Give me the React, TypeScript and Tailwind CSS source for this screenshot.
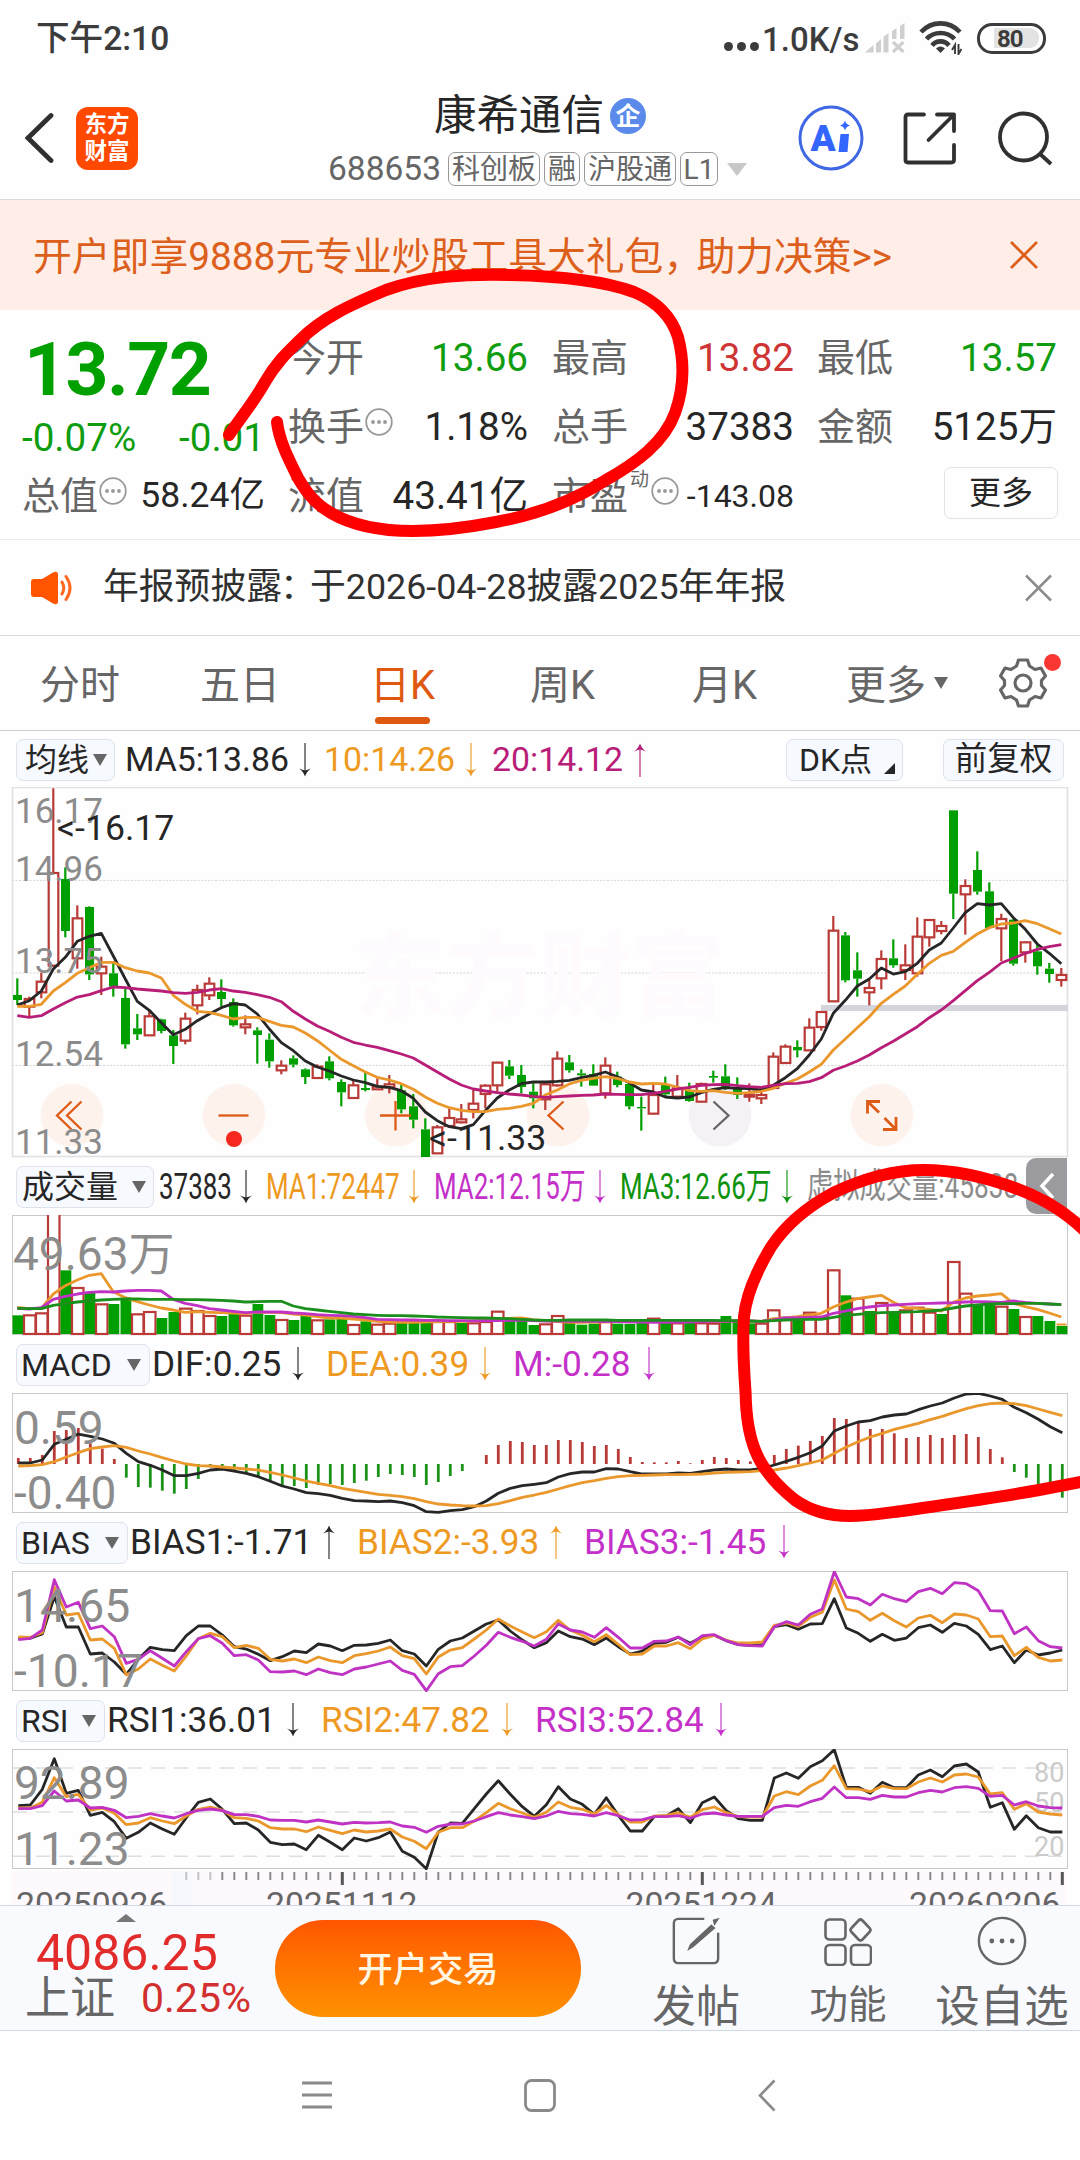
import { ReactNode } from 'react'
import { clsx } from 'clsx'

const GREEN = '#009f00'
const RED = '#b93a37'
const ORANGE = '#ea972b'
const PURPLE = '#c032c4'
const MAGENTA = '#b81d78'
const INK = '#262626'

// 'u' = up (hollow red), 'd' = down (solid green); values are high, body top, body bottom, low
type Candle = ['u' | 'd', number, number, number, number]

const CANDLES: Candle[] = [
  ['d', 595, 645, 660, 675], ['u', 650, 657, 680, 708], ['u', 578, 605, 637, 655], ['u', 25, 279, 557, 560],
  ['d', 262, 297, 453, 472], ['u', 376, 415, 535, 566], ['d', 379, 381, 583, 600], ['u', 530, 560, 580, 645],
  ['d', 545, 580, 620, 650], ['d', 622, 654, 793, 806], ['d', 702, 745, 763, 780], ['u', 690, 709, 766, 768],
  ['d', 716, 718, 753, 760], ['d', 750, 766, 798, 852], ['u', 698, 716, 782, 793], ['u', 614, 630, 676, 703],
  ['u', 592, 611, 646, 660], ['d', 598, 636, 657, 680], ['d', 655, 666, 736, 740], ['u', 706, 733, 742, 763],
  ['d', 742, 751, 765, 851], ['d', 760, 779, 844, 863], ['u', 841, 857, 871, 883], ['d', 826, 835, 854, 862],
  ['d', 865, 868, 891, 912], ['u', 853, 860, 894, 896], ['d', 829, 844, 895, 901], ['d', 898, 906, 937, 979],
  ['u', 900, 916, 954, 956], ['d', 878, 924, 930, 934], ['u', 895, 920, 928, 930], ['u', 885, 913, 922, 940],
  ['d', 915, 931, 988, 1000], ['d', 942, 979, 1019, 1045], ['d', 1015, 1048, 1131, 1131], ['u', 1035, 1042, 1120, 1122],
  ['u', 983, 1014, 1038, 1040], ['u', 972, 1018, 1027, 1030], ['u', 925, 971, 990, 1015], ['u', 913, 917, 942, 985],
  ['u', 845, 848, 916, 935], ['d', 840, 859, 887, 897], ['d', 855, 885, 921, 940], ['d', 910, 935, 955, 985],
  ['u', 905, 913, 958, 990], ['u', 814, 836, 916, 920], ['d', 825, 847, 871, 878], ['d', 868, 880, 886, 920],
  ['d', 853, 882, 917, 917], ['u', 832, 857, 940, 956], ['d', 875, 890, 915, 922], ['d', 905, 912, 979, 988],
  ['d', 950, 981, 985, 1052], ['u', 915, 945, 1001, 1003], ['d', 890, 912, 943, 950], ['u', 885, 925, 950, 955],
  ['d', 908, 930, 963, 965], ['u', 908, 912, 965, 967], ['d', 872, 888, 893, 908], ['d', 853, 889, 925, 930],
  ['d', 892, 925, 945, 957], ['u', 910, 944, 950, 965], ['u', 920, 945, 955, 972], ['u', 817, 830, 924, 926],
  ['u', 793, 800, 849, 851], ['d', 781, 801, 811, 832], ['u', 715, 743, 811, 813], ['u', 693, 696, 741, 752],
  ['u', 408, 452, 664, 666], ['d', 456, 466, 601, 607], ['d', 517, 571, 596, 650], ['u', 600, 624, 637, 676],
  ['u', 511, 537, 595, 628], ['d', 478, 535, 556, 563], ['u', 493, 556, 570, 600], ['u', 412, 470, 580, 590],
  ['u', 417, 420, 472, 500], ['u', 423, 438, 453, 463], ['d', 91, 91, 341, 417], ['u', 298, 318, 343, 464],
  ['d', 214, 270, 335, 344], ['d', 307, 334, 444, 446], ['u', 401, 417, 445, 543], ['d', 417, 419, 551, 557],
  ['u', 484, 487, 517, 548], ['d', 490, 514, 559, 584], ['d', 549, 566, 582, 608], ['u', 564, 585, 600, 620],
]

const MA5 = [675, 662, 633, 567, 532, 484, 469, 460, 528, 597, 664, 691, 728, 764, 748, 722, 702, 683, 671, 675, 702, 747, 788, 812, 843, 861, 873, 888, 900, 908, 919, 922, 932, 955, 996, 1022, 1040, 1046, 1034, 992, 954, 930, 911, 906, 906, 904, 901, 893, 886, 876, 890, 908, 930, 936, 951, 954, 951, 938, 928, 923, 925, 926, 930, 916, 893, 866, 825, 777, 700, 661, 618, 597, 564, 582, 575, 550, 510, 489, 444, 398, 371, 375, 371, 413, 448, 492, 520, 551]
const MA10 = [679, 679, 673, 633, 608, 580, 563, 547, 547, 563, 573, 579, 594, 646, 673, 694, 697, 706, 717, 712, 712, 724, 736, 741, 759, 782, 810, 838, 857, 876, 892, 900, 911, 928, 951, 970, 983, 991, 995, 995, 988, 985, 979, 970, 945, 930, 912, 901, 895, 890, 895, 906, 912, 910, 912, 921, 932, 934, 932, 937, 940, 938, 934, 925, 910, 897, 876, 853, 810, 777, 743, 710, 670, 643, 618, 583, 550, 526, 514, 487, 462, 443, 432, 429, 422, 431, 446, 462]
const MA20 = [707, 712, 707, 687, 668, 651, 644, 632, 621, 623, 627, 630, 633, 638, 640, 637, 630, 626, 633, 637, 644, 652, 665, 694, 717, 738, 754, 772, 787, 795, 802, 812, 822, 834, 855, 876, 897, 915, 927, 933, 938, 942, 945, 949, 952, 950, 948, 946, 945, 942, 943, 944, 944, 940, 934, 927, 922, 916, 914, 913, 917, 920, 922, 916, 911, 910, 905, 893, 871, 858, 843, 825, 803, 784, 762, 740, 713, 690, 662, 632, 602, 577, 549, 535, 520, 508, 500, 494]

const VOL_UP = new Set([1, 2, 3, 5, 7, 10, 11, 14, 15, 16, 19, 22, 25, 28, 30, 31, 35, 36, 38, 39, 40, 44, 45, 49, 53, 55, 57, 58, 62, 63, 64, 66, 67, 68, 70, 72, 74, 75, 76, 78, 79, 82, 84])
const VOL = [466, 463, 457, 150, 331, 381, 398, 430, 432, 413, 460, 453, 474, 456, 443, 450, 465, 468, 460, 464, 432, 465, 477, 480, 468, 478, 478, 475, 492, 484, 491, 488, 488, 487, 486, 483, 483, 489, 487, 483, 452, 482, 480, 495, 490, 465, 489, 494, 491, 478, 491, 492, 480, 473, 488, 487, 487, 487, 488, 468, 480, 490, 488, 448, 470, 475, 455, 468, 328, 406, 413, 453, 426, 457, 448, 440, 455, 462, 303, 398, 433, 432, 437, 447, 468, 468, 483, 498]
const VMA1 = [442, 446, 445, 402, 377, 360, 346, 341, 395, 413, 425, 435, 444, 450, 457, 455, 457, 458, 459, 461, 457, 457, 458, 462, 465, 470, 474, 474, 477, 480, 484, 486, 487, 487, 486, 485, 484, 484, 483, 481, 478, 475, 474, 479, 482, 485, 487, 487, 486, 486, 485, 485, 484, 484, 484, 484, 484, 485, 485, 484, 482, 483, 484, 476, 474, 470, 465, 460, 441, 427, 416, 411, 406, 427, 443, 445, 448, 453, 427, 414, 408, 405, 401, 430, 440, 448, 459, 471]
const VMA2 = [445, 447, 443, 418, 409, 402, 397, 395, 396, 393, 391, 391, 393, 418, 430, 437, 446, 450, 454, 458, 456, 456, 456, 459, 461, 464, 466, 467, 469, 473, 478, 479, 480, 480, 481, 481, 482, 482, 483, 482, 482, 481, 480, 482, 483, 483, 484, 484, 484, 485, 485, 486, 486, 487, 487, 486, 486, 485, 484, 484, 483, 483, 484, 480, 474, 473, 472, 471, 460, 453, 446, 441, 437, 435, 433, 431, 430, 429, 428, 426, 425, 426, 427, 423, 427, 430, 432, 434]
const VMA3 = [445, 446, 446, 436, 431, 426, 423, 420, 418, 417, 417, 418, 418, 418, 419, 419, 420, 421, 423, 426, 425, 424, 424, 438, 446, 450, 454, 458, 462, 464, 466, 467, 467, 468, 469, 471, 472, 473, 474, 474, 475, 476, 478, 480, 481, 481, 480, 480, 480, 480, 481, 481, 481, 481, 481, 481, 481, 481, 481, 482, 482, 483, 484, 482, 480, 479, 478, 478, 472, 466, 463, 460, 458, 457, 456, 455, 453, 450, 444, 438, 435, 432, 431, 431, 430, 430, 432, 434]

const MACD_BARS = [894, 894, 885, 813, 810, 804, 850, 866, 897, 953, 981, 983, 992, 1001, 987, 957, 922, 930, 935, 940, 948, 963, 975, 978, 984, 975, 972, 975, 969, 962, 951, 942, 945, 951, 975, 966, 948, 933, 912, 885, 855, 843, 846, 855, 855, 840, 840, 846, 858, 855, 867, 891, 906, 907, 907, 903, 910, 900, 891, 894, 900, 904, 900, 885, 867, 857, 843, 828, 774, 777, 786, 807, 807, 820, 834, 831, 825, 834, 825, 822, 831, 867, 892, 936, 953, 975, 968, 1013]
const DIF = [909, 909, 900, 853, 838, 822, 829, 837, 850, 880, 905, 916, 930, 947, 947, 940, 930, 927, 933, 940, 950, 964, 978, 987, 998, 1001, 1006, 1015, 1022, 1023, 1025, 1023, 1028, 1037, 1055, 1057, 1052, 1049, 1040, 1023, 1000, 985, 977, 973, 968, 951, 941, 936, 936, 926, 927, 935, 942, 942, 942, 939, 940, 935, 930, 927, 930, 930, 925, 915, 904, 892, 878, 858, 813, 798, 786, 782, 771, 765, 762, 749, 738, 729, 714, 702, 700, 708, 718, 742, 758, 778, 800, 818]
const DEA = [918, 917, 914, 905, 891, 878, 866, 861, 857, 862, 873, 882, 893, 903, 912, 917, 918, 921, 924, 927, 930, 937, 945, 954, 963, 970, 977, 985, 991, 997, 1003, 1006, 1010, 1016, 1025, 1032, 1035, 1037, 1038, 1037, 1031, 1022, 1012, 1005, 997, 987, 977, 968, 962, 955, 950, 947, 946, 945, 944, 944, 943, 942, 939, 937, 936, 935, 932, 930, 924, 917, 909, 900, 880, 861, 845, 831, 820, 808, 799, 790, 779, 769, 757, 746, 737, 731, 729, 731, 737, 747, 757, 767]

const BIAS1 = [355, 355, 342, 230, 321, 321, 402, 399, 426, 463, 418, 382, 389, 392, 347, 318, 318, 345, 380, 387, 403, 422, 410, 393, 398, 372, 378, 392, 376, 375, 370, 360, 392, 402, 438, 388, 363, 354, 333, 312, 300, 333, 360, 383, 368, 333, 350, 357, 374, 354, 380, 402, 393, 370, 367, 352, 370, 350, 346, 362, 374, 376, 374, 320, 314, 328, 312, 311, 236, 324, 340, 364, 343, 361, 354, 323, 315, 337, 310, 318, 343, 389, 378, 428, 390, 405, 399, 390]
const BIAS2 = [351, 352, 338, 200, 285, 280, 360, 357, 385, 464, 447, 417, 436, 453, 408, 356, 340, 350, 383, 376, 385, 418, 423, 417, 428, 411, 422, 428, 407, 401, 393, 381, 407, 416, 462, 411, 390, 383, 357, 330, 297, 318, 336, 353, 335, 301, 331, 346, 365, 344, 373, 404, 402, 378, 378, 368, 386, 357, 346, 361, 369, 369, 366, 316, 309, 319, 292, 277, 180, 267, 275, 301, 280, 302, 321, 294, 286, 308, 282, 285, 297, 350, 348, 407, 382, 412, 423, 420]
const BIAS3 = [359, 355, 330, 179, 261, 247, 326, 318, 350, 430, 418, 392, 415, 438, 395, 356, 347, 370, 407, 404, 420, 455, 456, 453, 464, 447, 458, 464, 447, 441, 432, 423, 451, 463, 512, 461, 440, 437, 408, 376, 337, 352, 364, 378, 358, 312, 330, 336, 352, 323, 352, 384, 384, 364, 363, 351, 374, 347, 344, 362, 374, 377, 378, 320, 305, 315, 283, 267, 155, 231, 236, 255, 223, 236, 245, 215, 205, 221, 188, 191, 212, 272, 273, 341, 321, 362, 380, 384]

const RSI1 = [857, 855, 808, 716, 820, 811, 886, 877, 905, 955, 937, 909, 927, 943, 893, 847, 837, 868, 911, 909, 930, 967, 974, 972, 989, 946, 967, 989, 954, 963, 953, 936, 994, 1012, 1046, 936, 909, 910, 866, 822, 782, 823, 860, 889, 854, 800, 837, 853, 883, 833, 886, 933, 933, 890, 888, 866, 908, 848, 831, 872, 896, 901, 901, 774, 759, 775, 740, 722, 689, 802, 802, 820, 787, 803, 803, 765, 750, 770, 738, 732, 756, 862, 848, 928, 887, 923, 936, 936]
const RSI2 = [864, 864, 847, 773, 830, 823, 870, 864, 880, 914, 909, 893, 903, 911, 888, 868, 861, 870, 893, 895, 903, 923, 927, 927, 935, 921, 931, 941, 930, 936, 933, 927, 951, 964, 986, 937, 923, 923, 903, 878, 850, 866, 879, 892, 877, 846, 862, 868, 882, 856, 884, 906, 906, 888, 886, 878, 892, 869, 861, 878, 890, 891, 891, 828, 815, 824, 798, 781, 737, 806, 807, 815, 798, 806, 806, 786, 774, 786, 765, 762, 771, 822, 818, 868, 851, 876, 882, 885]
const RSI3 = [866, 866, 857, 813, 843, 840, 864, 862, 871, 893, 889, 881, 888, 894, 881, 871, 867, 872, 884, 884, 889, 900, 901, 901, 906, 900, 906, 912, 907, 909, 908, 906, 918, 922, 937, 919, 912, 912, 903, 890, 878, 885, 890, 896, 888, 874, 881, 883, 888, 878, 887, 900, 899, 890, 890, 887, 895, 882, 879, 885, 889, 889, 889, 863, 856, 859, 845, 835, 801, 833, 833, 838, 826, 831, 831, 818, 811, 816, 803, 800, 805, 829, 826, 855, 845, 858, 863, 864]

const barX = (i: number) => 17.3 + i * 12
// series are stored in thirds of a pixel from the panel's base line
const toY = (v: number, base: number) => base + v / 3

function Line({ data, base, color, shift = 0 }: { data: number[]; base: number; color: string; shift?: number }) {
  return (
    <polyline
      points={data.map((v, i) => `${barX(i) + shift},${toY(v, base).toFixed(1)}`).join(' ')}
      fill="none"
      stroke={color}
      strokeWidth={2.8}
      strokeLinejoin="round"
    />
  )
}

function Panel({ top, height, frame = '#c9c9c9', children }: { top: number; height: number; frame?: string; children: ReactNode }) {
  return (
    <svg
      className="block shrink-0 font-[Roboto,'Noto_Sans_CJK_SC',sans-serif]"
      width={1080}
      height={height}
      viewBox={`0 ${top} 1080 ${height}`}
    >
      <rect x={12.5} y={top + 0.5} width={1055} height={height - 2} fill="none" stroke={frame} strokeWidth={frame === '#c9c9c9' ? 1 : 1.6} />
      {children}
    </svg>
  )
}

function Label({ x, y, size, fill = '#8c8c8c', children }: { x: number; y: number; size: number; fill?: string; children: ReactNode }) {
  return <text x={x} y={y} fontSize={size} fill={fill}>{children}</text>
}

const ROUND_BUTTONS = [72, 234, 396, 558, 720, 882]

function KLine() {
  const base = 780
  return (
    <Panel top={787} height={371} frame="#e2e2e4">
      {[880.4, 973, 1065.4].map(y => (
        <line key={y} x1={12} x2={1067} y1={y} y2={y} stroke="#d4d4d4" strokeWidth={1} strokeDasharray="2 1.5" />
      ))}
      <text x={353} y={1010} fontSize={93} fontWeight={700} fill="#fefafd">东方财富</text>
      {ROUND_BUTTONS.map((x, i) => (
        <circle key={x} cx={x} cy={1115.3} r={31.3} fill={i === 4 ? '#f5f2f7' : '#fef2ed'} />
      ))}
      <rect x={821} y={1005} width={247} height={6} fill="#d4d5dc" />
      {CANDLES.map(([dir, hi, top, bottom, lo], i) => {
        const x = barX(i)
        const color = dir === 'u' ? RED : GREEN
        const [h, t, b, l] = [hi, top, bottom, lo].map(v => toY(v, base))
        return (
          <g key={i} stroke={color} strokeWidth={2.2}>
            {h < t && <line x1={x} x2={x} y1={h} y2={t} />}
            {l > b && <line x1={x} x2={x} y1={b} y2={l} />}
            {dir === 'u'
              ? <rect x={x - 4.6} y={t} width={9.6} height={b - t} fill="#fff" />
              : <rect x={x - 4.3} y={t} width={9} height={b - t} fill={color} stroke="none" />}
          </g>
        )
      })}
      <Line data={MA5} base={base} color={INK} />
      <Line data={MA10} base={base} color={ORANGE} />
      <Line data={MA20} base={base} color={MAGENTA} />
      <g fill="none" stroke="#dd5a17" strokeWidth={2.3}>
        <path d="M71.5 1101.5 L57 1115.5 L71.5 1129.5 M81.5 1101.5 L67 1115.5 L81.5 1129.5" />
        <path d="M218.5 1115.5 H248.5" />
        <path d="M380 1115.5 H411 M395.5 1101 V1130.5" />
        <path d="M563.5 1101.5 L548.5 1115.5 L563.5 1129.5" />
        <path d="M713.5 1101.5 L728.5 1115.5 L713.5 1129.5" stroke="#666" />
        <path d="M867.5 1113.5 V1101.5 H880 M867.5 1101.5 L879 1112.5 M883 1129.5 H896 V1117 M896 1129.5 L884.5 1118" strokeWidth={2.8} />
      </g>
      <circle cx={234} cy={1139} r={8} fill="#f5271f" />
      <Label x={15} y={822.5} size={35}>16.17</Label>
      <Label x={15} y={880.5} size={35}>14.96</Label>
      <Label x={15} y={972.5} size={35}>13.75</Label>
      <Label x={15} y={1065.5} size={35}>12.54</Label>
      <Label x={15} y={1153.5} size={35}>11.33</Label>
      <Label x={57} y={840} size={35.6} fill={INK}>&lt;-16.17</Label>
      <Label x={429} y={1150} size={35.6} fill={INK}>&lt;-11.33</Label>
    </Panel>
  )
}

function VolumeChart() {
  const base = 1160
  return (
    <Panel top={1215} height={121}>
      {VOL.map((v, i) => {
        const y = toY(v, base)
        return VOL_UP.has(i)
          ? <rect key={i} x={barX(i) - 5.3} y={y + 1} width={11.5} height={1333 - y} fill="#fff" stroke={RED} strokeWidth={2.2} />
          : <rect key={i} x={barX(i) - 4.8} y={y} width={10.8} height={1334 - y} fill={GREEN} />
      })}
      <path d="M1056.5 1324.5 H1066.5" stroke={ORANGE} strokeWidth={2} />
      <Line data={VMA1} base={base} color={ORANGE} />
      <Line data={VMA2} base={base} color={PURPLE} />
      <Line data={VMA3} base={base} color="#1b8f1b" />
      <Label x={13} y={1270} size={46}>49.63万</Label>
    </Panel>
  )
}

function MacdChart() {
  const base = 1160
  return (
    <Panel top={1393} height={121}>
      {MACD_BARS.map((v, i) => (
        <line key={i} x1={barX(i) + 1} x2={barX(i) + 1} y1={1464} y2={toY(v, base)} stroke={v < 912 ? RED : '#1b931b'} strokeWidth={2.8} />
      ))}
      <Line data={DIF} base={base} color={INK} shift={1} />
      <Line data={DEA} base={base} color={ORANGE} shift={1} />
      <Label x={14} y={1444} size={46}>0.59</Label>
      <Label x={14} y={1508.5} size={46}>-0.40</Label>
    </Panel>
  )
}

function BiasChart() {
  return (
    <Panel top={1571} height={121}>
      <Line data={BIAS1} base={1520} color={INK} shift={1} />
      <Line data={BIAS2} base={1520} color={ORANGE} shift={1} />
      <Line data={BIAS3} base={1520} color={PURPLE} shift={1} />
      <Label x={14} y={1621.5} size={46.3}>14.65</Label>
      <Label x={14} y={1686.5} size={46.3}>-10.17</Label>
    </Panel>
  )
}

function RsiChart() {
  return (
    <Panel top={1749} height={121}>
      {[1768, 1812, 1856.3].map(y => (
        <line key={y} x1={13} x2={1067} y1={y} y2={y} stroke="#dedede" strokeWidth={1.5} strokeDasharray="14 9" />
      ))}
      <Label x={1034} y={1781.5} size={27} fill="#cbcbcb">80</Label>
      <Label x={1034} y={1811.5} size={27} fill="#cbcbcb">50</Label>
      <Label x={1034} y={1855.5} size={27} fill="#cbcbcb">20</Label>
      <Line data={RSI1} base={1520} color={INK} shift={1} />
      <Line data={RSI2} base={1520} color={ORANGE} shift={1} />
      <Line data={RSI3} base={1520} color={PURPLE} shift={1} />
      <Label x={14} y={1799.3} size={46}>92.89</Label>
      <Label x={14} y={1864.5} size={46}>11.23</Label>
    </Panel>
  )
}

function DateAxis() {
  return (
    <svg className="block shrink-0 font-[Roboto,sans-serif]" width={1080} height={35} viewBox="0 1870 1080 35">
      <rect x={12} y={1871} width={1055} height={34} fill="#fdf9fd" />
      <rect x={172} y={1871} width={20} height={34} fill="#f7f8fd" />
      {Array.from({ length: 74 }, (_, n) => n + 14).map(i => {
        const major = i === 27 || i === 57 || i === 87
        const x = barX(i) + 1
        return <line key={i} x1={x} x2={x} y1={1872} y2={major ? 1885 : 1880} stroke={major ? '#555' : i < 17 ? '#c4c4c4' : '#8a8a8a'} strokeWidth={major ? 3 : 2} />
      })}
      <Label x={16} y={1915.5} size={33.7} fill="#666">20250926</Label>
      <Label x={266} y={1915.5} size={33.7} fill="#666">20251112</Label>
      <Label x={625.5} y={1915.5} size={33.7} fill="#666">20251224</Label>
      <Label x={909} y={1915.5} size={33.7} fill="#666">20260206</Label>
    </svg>
  )
}

function Arrow({ up }: { up?: boolean }) {
  return (
    <svg width="14" height="34" viewBox="0 0 14 34" className={clsx('shrink-0', up && 'rotate-180')}>
      <path d="M7 0 V30" stroke="currentColor" strokeWidth="1.5" opacity=".75" />
      <path d="M1 25.5 Q5 28 7 33.5 Q9 28 13 25.5 Q9.5 27 7 27.5 Q4.5 27 1 25.5Z" fill="currentColor" />
    </svg>
  )
}

function Caret({ className }: { className?: string }) {
  return (
    <svg width="14" height="12" viewBox="0 0 14 12" className={clsx('shrink-0', className)}>
      <path d="M0 0 H14 L7 12Z" fill="currentColor" />
    </svg>
  )
}

function Chip({ width, children }: { width: string; children: ReactNode }) {
  return (
    <div className={clsx('flex h-[42px] shrink-0 items-center rounded-[7px] border border-[#dfe2ec] bg-[#f6f9fe] text-[32px] text-[#262626]', width)}>
      {children}
    </div>
  )
}

interface LegendItem {
  text: string
  width: string
  color: string
  up?: boolean
}

function Legend({ name, chip, items }: { name: string; chip: string; items: LegendItem[] }) {
  return (
    <div className="flex h-[57px] shrink-0 items-center pl-4">
      <Chip width={chip}>
        <span className="pl-[4px]">{name}</span>
        <Caret className="ml-auto mr-[8px] text-[#666]" />
      </Chip>
      {items.map(({ text, width, color, up }) => (
        <div key={text} className={clsx('flex shrink-0 items-center justify-between pl-[2px] pr-[19px]', width, color)}>
          <span className="text-[35.2px]">{text}</span>
          <Arrow up={up} />
        </div>
      ))}
    </div>
  )
}

// volume legend is squeezed horizontally so all five readings fit on one row
const VOLUME_ITEMS: LegendItem[] = [
  { text: '37383', width: 'w-[107px]', color: 'text-[#262626]' },
  { text: 'MA1:72447', width: 'w-[168px]', color: 'text-[#ee9a22]' },
  { text: 'MA2:12.15万', width: 'w-[186px]', color: 'text-[#c430c8]' },
  { text: 'MA3:12.66万', width: 'w-[187px]', color: 'text-[#0f930f]' },
]

function VolumeLegend() {
  return (
    <div className="relative flex h-[57px] shrink-0 items-center overflow-hidden pl-4">
      <Chip width="w-[138px]">
        <span className="pl-[5px]">成交量</span>
        <Caret className="ml-auto mr-[7px] text-[#666]" />
      </Chip>
      <div className="flex items-center pl-[5px]">
        {VOLUME_ITEMS.map(({ text, width, color }) => (
          <div key={text} className={clsx('relative flex shrink-0 items-center justify-end pr-[13px]', width, color)}>
            <span className="absolute left-0 origin-left scale-x-[.72] whitespace-nowrap text-[36px]">{text}</span>
            <Arrow />
          </div>
        ))}
        <span className="origin-left scale-x-[.75] whitespace-nowrap text-[35px] text-[#8c8c8c]">虚拟成交量:45838</span>
      </div>
      <div className="absolute right-[13px] top-0 flex h-[56px] w-[41px] items-center justify-center rounded-l-[10px] bg-[#9b9a9e]">
        <svg width="16" height="28" viewBox="0 0 16 28" fill="none" stroke="#fff" strokeWidth="3.5">
          <path d="M14 2 L3 14 L14 26" />
        </svg>
      </div>
    </div>
  )
}

function Info() {
  return (
    <svg width="28" height="28" viewBox="0 0 28 28" className="ml-px shrink-0 -translate-y-[5px]">
      <circle cx="14" cy="14" r="12.8" fill="none" stroke="#999" strokeWidth="1.8" />
      <circle cx="8" cy="14" r="1.9" fill="#999" />
      <circle cx="14" cy="14" r="1.9" fill="#999" />
      <circle cx="20" cy="14" r="1.9" fill="#999" />
    </svg>
  )
}

function StatusBar() {
  return (
    <div className="flex h-[76px] shrink-0 items-center pl-[36px] pr-[34px] text-[#3c3c3c]">
      <span className="pt-[2px] text-[33.6px] font-medium">下午2:10</span>
      <span className="ml-auto mr-[3px] mt-[17px] flex gap-[4px]">
        {[0, 1, 2].map(n => <i key={n} className="h-[9px] w-[9px] rounded-full bg-[#3c3c3c]" />)}
      </span>
      <span className="mr-[4px] w-[99px] whitespace-nowrap pt-[2px] text-[33px] font-medium">1.0K/s</span>
      <svg width="41" height="30" viewBox="0 0 41 30" fill="#cfcfcf">
        <path d="M0 29.5 L8.5 22 V29.5Z M11 20.5 L16 16 V29.5 H11Z M18.5 14 L23.5 10 V29.5 H18.5Z M27 8 L31.5 5 V16 H27Z M35 3 L39.5 0 V16 H35Z" />
        <path d="M28 19 L38.5 29 M38.5 19 L28 29" stroke="#cfcfcf" strokeWidth="3.2" />
      </svg>
      <svg width="43" height="34" viewBox="0 0 43 34" className="ml-[13px]" fill="none" stroke="#3c3c3c" strokeWidth="4.6">
        <path d="M2 11 C13 -.5 30 -.5 41 11" />
        <path d="M7.5 18 C15 10 28 10 35.5 18" />
        <path d="M13 24.5 C17.5 19 25.5 19 30 24.5" />
        <path d="M17 27.5 Q21.5 23.5 26 27.5 L21.5 32Z" fill="#3c3c3c" stroke="none" />
        <path d="M36 33 V24 L33 29 M39.5 23 V33 L42.5 28" strokeWidth="1.9" />
      </svg>
      <div className="ml-[15px] flex h-[31px] w-[69px] items-center justify-end rounded-[15px] border-[3px] border-[#3c3c3c] bg-white pr-[4px]">
        <span className="flex h-[20px] w-[45px] items-center rounded-r-[9px] bg-[#e3e3e3] pl-[3px] pt-px text-[24px] font-bold leading-none tracking-[-1px]">80</span>
      </div>
    </div>
  )
}

function Tag({ width, children }: { width: string; children: ReactNode }) {
  return (
    <span className={clsx('flex h-[34px] items-center justify-center whitespace-nowrap rounded-[7px] border-[1.5px] border-[#999] pt-[2px] text-[28px] leading-none text-[#666]', width)}>
      {children}
    </span>
  )
}

function Header() {
  return (
    <header className="flex h-[124px] shrink-0 border-b border-[#d9d9d9] text-[#262626]">
      <svg width="30" height="52" viewBox="0 0 30 52" className="ml-[25px] mt-[36px]" fill="none" stroke="#303030" strokeWidth="4.8" strokeLinecap="round">
        <path d="M26 3.5 L3 26 L26 48.5" />
      </svg>
      <div className="ml-[21px] mt-[31px] flex h-[63px] w-[62px] flex-col items-center justify-center rounded-[12px] bg-[#ff4800] pb-[5px] font-['Noto_Sans_CJK_SC',sans-serif] text-[22.5px] font-bold leading-[27px] text-white">
        <span>东方</span>
        <span>财富</span>
      </div>
      <div className="ml-[190px] flex flex-col">
        <div className="ml-[106px] mt-[15px] flex h-[50px] items-center">
          <h1 className="text-[42.5px] leading-none">康希通信</h1>
          <span className="ml-[6px] flex h-[36px] w-[36px] items-center justify-center rounded-full bg-[#5b8bea] text-[25px] font-bold leading-none text-white">企</span>
        </div>
        <div className="mt-[10px] flex h-[36px] items-center gap-[4px]">
          <span className="mr-[3px] text-[33.5px] leading-none text-[#666]">688653</span>
          <Tag width="w-[92px]">科创板</Tag>
          <Tag width="w-[36px]">融</Tag>
          <Tag width="w-[92px]">沪股通</Tag>
          <Tag width="w-[38px]">L1</Tag>
          <svg width="20" height="13" viewBox="0 0 20 13" className="ml-[5px]"><path d="M0 0 H20 L10 13Z" fill="#c8c8c8" /></svg>
        </div>
      </div>
      <svg width="66" height="66" viewBox="0 0 66 66" className="ml-auto mt-[29px]">
        <circle cx="33" cy="33" r="31" fill="none" stroke="#4068e4" strokeWidth="3" />
        <text x="12.5" y="45.5" fontSize="37" fontWeight="900" fill="#3366ff" className="font-[Roboto,sans-serif]">A</text>
        <path d="M42.5 29 H51 L49.5 47 H40.5Z" fill="#3366ff" />
        <path d="M47 15.5 Q48 19.5 52 20.5 Q48 21.5 47 25.5 Q46 21.5 42 20.5 Q46 19.5 47 15.5Z" fill="#3366ff" />
      </svg>
      <svg width="54" height="54" viewBox="0 0 54 54" className="ml-[39px] mt-[35px]" fill="none" stroke="#303030" strokeWidth="3.8" strokeLinecap="round" strokeLinejoin="round">
        <path d="M21 3.5 H5 Q2.5 3.5 2.5 6 V49 Q2.5 51.5 5 51.5 H48 Q51 51.5 51 49 V34" />
        <path d="M34 3.5 H51 V20 M50 4.5 L25.5 29" />
      </svg>
      <svg width="56" height="56" viewBox="0 0 56 56" className="ml-[41px] mr-[26px] mt-[34px]" fill="none" stroke="#303030" strokeWidth="3.8">
        <circle cx="25.5" cy="27" r="23.5" />
        <path d="M41.5 43.5 L53 54" />
      </svg>
    </header>
  )
}

function Cell({ label, info, value, tone = 'text-[#262626]' }: { label: string; info?: boolean; value: string; tone?: string }) {
  return (
    <div className="flex h-[69px] items-center whitespace-nowrap pt-[3px]">
      <span className="text-[38px] text-[#666]">{label}</span>
      {info && <Info />}
      <span className={clsx('ml-auto text-[38.6px]', tone)}>{value}</span>
    </div>
  )
}

function Quote() {
  return (
    <section className="flex h-[230px] shrink-0 border-b border-[#ececec] pl-[22px] pr-[23px] pt-[12px]">
      <div className="w-[243px]">
        <div className="flex h-[93px] items-center pl-[2px] pt-[2px] text-[75px] font-bold tracking-[-1.5px] text-[#00a000]">13.72</div>
        <div className="flex h-[44px] items-center justify-between pt-[2px] text-[38.6px] text-[#0f9d0f]">
          <span>-0.07%</span>
          <span>-0.01</span>
        </div>
        <div className="flex h-[70px] items-center whitespace-nowrap pt-[3px]">
          <span className="text-[38px] text-[#666]">总值</span>
          <Info />
          <span className="ml-auto text-[35.5px] text-[#262626]">58.24亿</span>
        </div>
      </div>
      <div className="ml-[23px] w-[240px]">
        <Cell label="今开" value="13.66" tone="text-[#0f9d0f]" />
        <Cell label="换手" info value="1.18%" />
        <Cell label="流值" value="43.41亿" />
      </div>
      <div className="ml-[24px] w-[242px]">
        <Cell label="最高" value="13.82" tone="text-[#cf3434]" />
        <Cell label="总手" value="37383" />
        <div className="flex h-[69px] items-center whitespace-nowrap pt-[3px]">
          <span className="text-[38px] text-[#666]">市盈</span>
          <span className="mb-[34px] ml-[2px] mr-px text-[19px] leading-none text-[#666]">动</span>
          <Info />
          <span className="ml-auto text-[32px] text-[#262626]">-143.08</span>
        </div>
      </div>
      <div className="ml-[23px] w-[240px]">
        <Cell label="最低" value="13.57" tone="text-[#0f9d0f]" />
        <Cell label="金额" value="5125万" />
        <div className="ml-auto mr-[-1px] mt-[7px] flex h-[52px] w-[114px] items-center justify-center rounded-[7px] border-[1.5px] border-[#e3e3e3] text-[32px] text-[#262626]">更多</div>
      </div>
    </section>
  )
}

function Notice() {
  return (
    <div className="flex h-[96px] shrink-0 items-center border-b border-[#d9d9d9] pl-[31px] pr-[28px]">
      <svg width="42" height="34" viewBox="0 0 42 34">
        <path d="M3 8 H11 L22 1.5 Q27 -1 27 4 V30 Q27 35 22 32.5 L11 26 H3 Q0 26 0 23 V11 Q0 8 3 8Z" fill="#ff5500" />
        <path d="M31 11 Q34.5 17 31 23 M35 5.5 Q43 17 35 28.5" fill="none" stroke="#ff6a20" strokeWidth="3" strokeLinecap="round" />
      </svg>
      <span className="ml-[30px] flex whitespace-nowrap text-[35.8px] text-[#303030]">
        年报预披露<span className="w-[28px] -translate-x-[2px]">：</span>于2026-04-28披露2025年年报
      </span>
      <svg width="27" height="28" viewBox="0 0 27 28" className="ml-auto" stroke="#8c8c8c" strokeWidth="2.5">
        <path d="M1 1.5 L26 26.5 M26 1.5 L1 26.5" />
      </svg>
    </div>
  )
}

const TABS = [
  { label: '分时', width: 'w-[160px]' },
  { label: '五日', width: 'w-[170px]' },
  { label: '日K', width: 'w-[160px]', active: true },
  { label: '周K', width: 'w-[162px]' },
  { label: '月K', width: 'w-[154px]' },
  { label: '更多', width: 'w-[88px]' },
]

function Tabs() {
  return (
    <nav className="flex h-[95px] shrink-0 items-center border-b border-[#d0d0d0] pl-[40px] text-[40px] text-[#666]">
      {TABS.map(({ label, width, active }) => (
        <div key={label} className={clsx('relative flex h-full items-center whitespace-nowrap pt-[5px]', width, active && 'text-[#de5810]')}>
          {label}
          {active && <span className="absolute bottom-[6px] left-[5px] h-[7px] w-[55px] rounded-full bg-[#de5810]" />}
        </div>
      ))}
      <Caret className="text-[#666]" />
      <div className="relative ml-[51px]">
        <svg width="48" height="50" viewBox="0 0 48 50" fill="none" stroke="#666" strokeWidth="3.2" strokeLinejoin="round">
          <path d="M19.5 2 H28.5 L30.5 8 L36 11.5 L42 10 L46.5 18 L42.5 22.5 V27.5 L46.5 32 L42 40 L36 38.5 L30.5 42 L28.5 48 H19.5 L17.5 42 L12 38.5 L6 40 L1.5 32 L5.5 27.5 V22.5 L1.5 18 L6 10 L12 11.5 L17.5 8Z" />
          <circle cx="24" cy="25" r="8" />
        </svg>
        <span className="absolute -right-[14px] -top-[4px] h-[17px] w-[17px] rounded-full bg-[#fb3734]" />
      </div>
    </nav>
  )
}

function MaLegend() {
  return (
    <div className="flex h-[56px] shrink-0 items-center pl-4 pr-[16px] pt-px text-[33.8px]">
      <Chip width="w-[99px]">
        <span className="pl-[8px]">均线</span>
        <Caret className="ml-[4px] text-[#666]" />
      </Chip>
      <div className="flex w-[200px] items-center justify-between pl-[10px] pr-[3px] text-[#262626]">MA5:13.86<Arrow /></div>
      <div className="flex w-[166px] items-center justify-between pl-[9px] pr-[3px] text-[#ee9a22]">10:14.26<Arrow /></div>
      <div className="flex w-[166px] items-center justify-between pl-[11px] text-[#b81d78]">20:14.12<Arrow up /></div>
      <div className="ml-auto mr-[40px] flex h-[42px] w-[117px] items-center rounded-[7px] border border-[#dfe2ec] bg-[#f6f9fe] pl-[12px] text-[32px] text-[#262626]">
        DK点
        <svg width="11" height="11" viewBox="0 0 11 11" className="ml-[12px] mt-[18px]"><path d="M11 0 V11 H0Z" fill="#262626" /></svg>
      </div>
      <div className="flex h-[42px] w-[121px] items-center justify-center rounded-[7px] border border-[#dfe2ec] bg-[#f6f9fe] text-[32.5px] text-[#262626]">前复权</div>
    </div>
  )
}

function BottomBar() {
  return (
    <footer className="flex h-[126px] shrink-0 border-y border-[#cfd8e3] bg-[#f8fafe] text-[#666]">
      <div className="relative w-[275px] pt-[27px]">
        <svg width="20" height="8" viewBox="0 0 20 8" className="absolute left-[116px] top-[8px]"><path d="M10 0 L20 8 H0Z" fill="#777" /></svg>
        <div className="pl-[36px] text-[50px] leading-[40px] text-[#e22b2b]">4086.25</div>
        <div className="flex h-[48px] items-center whitespace-nowrap pl-[25px] pt-[2px]">
          <span className="text-[45px] leading-none">上证</span>
          <span className="ml-[26px] text-[41px] leading-none text-[#d22f2f]">0.25%</span>
        </div>
      </div>
      <button className="mt-[14px] h-[97px] w-[306px] rounded-[48px] bg-linear-to-b from-[#ff5500] to-[#ff9100] pt-[5px] text-[35.3px] font-medium text-[#fff6e4]">开户交易</button>
      <div className="ml-[65px] flex w-[100px] flex-col items-center pt-[11px]">
        <svg width="52" height="52" viewBox="0 0 52 52" fill="none" stroke="#666" strokeWidth="2.6">
          <path d="M35 2 H7 Q2 2 2 7 V45 Q2 50 7 50 H45 Q50 50 50 45 V17" />
          <path d="M46 8 L50 2 L45 3.5Z M42.5 9 L46 12 L23 32 L18 35 L20 30Z" fill="#666" strokeWidth="1.5" />
        </svg>
        <span className="mt-[19px] text-[44px] leading-[46px]">发帖</span>
      </div>
      <div className="ml-[52px] flex w-[100px] flex-col items-center pt-[12px]">
        <svg width="48" height="48" viewBox="0 0 48 48" fill="none" stroke="#666" strokeWidth="2.6">
          <rect x="1.5" y="1.5" width="20" height="20" rx="4" />
          <rect x="1.5" y="27" width="20" height="20" rx="4" />
          <rect x="27" y="27" width="20" height="20" rx="4" />
          <path d="M34.5 2.5 Q36.5 .5 38.5 2.5 L45.5 10 Q47.5 12 45.5 14 L38.5 21.5 Q36.5 23.5 34.5 21.5 L27.5 14 Q25.5 12 27.5 10Z" />
        </svg>
        <span className="mt-[16px] text-[38.5px] leading-[46px]">功能</span>
      </div>
      <div className="ml-[34px] flex w-[140px] flex-col items-center whitespace-nowrap pt-[10px]">
        <svg width="54" height="54" viewBox="0 0 54 54" fill="#666">
          <circle cx="27" cy="27" r="25" fill="none" stroke="#666" strokeWidth="2.6" />
          <circle cx="16" cy="27" r="2.6" /><circle cx="27" cy="27" r="2.6" /><circle cx="38" cy="27" r="2.6" />
        </svg>
        <span className="mt-[18px] text-[44.5px] leading-[46px]">设自选</span>
      </div>
    </footer>
  )
}

function SystemNav() {
  return (
    <div className="flex h-[129px] shrink-0 items-center pl-[301px] text-[#8a8a8a]">
      <svg width="32" height="34" viewBox="0 0 32 34" stroke="currentColor" strokeWidth="2.8"><path d="M1 4 H31 M1 16 H31 M1 28 H31" /></svg>
      <svg width="32" height="34" viewBox="0 0 32 34" className="ml-[191px]" fill="none" stroke="currentColor" strokeWidth="2.8"><rect x="1.5" y="1.5" width="29" height="30" rx="6" /></svg>
      <svg width="18" height="34" viewBox="0 0 18 34" className="ml-[202px]" fill="none" stroke="currentColor" strokeWidth="2.6"><path d="M16.5 1.5 L2 16.5 L16.5 31.5" /></svg>
    </div>
  )
}

// hand-drawn marks lying over the page
function Scribbles() {
  return (
    <svg className="pointer-events-none absolute left-0 top-0" width="1080" height="2160" viewBox="0 0 1080 2160" fill="none" stroke="#fe0000" strokeWidth="12" strokeLinecap="round" strokeLinejoin="round">
      <path d="M229 435 C245 412 255 400 265 382 C278 360 290 350 300 340 C322 318 350 305 386 290 C425 276 465 274 510 275 C560 276 604 281 634 292 C658 302 672 318 678 337 C684 360 685 385 675 413 C664 443 636 463 606 480 C570 503 535 515 496 522 C465 528 440 531 413 531 C375 531 350 524 331 513 C312 502 304 488 298 478 C288 458 279 440 277 422" />
      <path d="M1086 1232 C1066 1212 1040 1197 1015 1188 C985 1177 955 1170 924 1170 C890 1170 860 1180 833 1193 C805 1208 785 1226 771 1247 C756 1272 746 1295 744 1317 C742 1345 744 1370 745.6 1393 C746 1415 749 1435 755 1450 C763 1471 780 1488 795 1500 C812 1512 830 1516 850 1516 C870 1516 885 1513 902 1511 C950 1504 995 1498 1039 1490 L1086 1481" />
    </svg>
  )
}

export default function App() {
  return (
    <div className="relative flex h-[2160px] w-[1080px] flex-col overflow-hidden bg-[#fefefe] font-[Roboto,'Noto_Sans_CJK_SC',sans-serif] leading-none">
      <StatusBar />
      <Header />
      <div className="flex h-[110px] shrink-0 items-center justify-between bg-[#feeee7] pl-[33px] pr-[42px] pt-[4px] text-[38.8px] text-[#dd5f1c]">
        <span className="flex whitespace-nowrap">开户即享9888元专业炒股工具大礼包<span className="w-[33px]">，</span>助力决策&gt;&gt;</span>
        <svg width="28" height="28" viewBox="0 0 28 28" className="-translate-y-[2px]" stroke="#dd5f1c" strokeWidth="2.8"><path d="M1 1 L27 27 M27 1 L1 27" /></svg>
      </div>
      <Quote />
      <Notice />
      <Tabs />
      <MaLegend />
      <KLine />
      <VolumeLegend />
      <VolumeChart />
      <Legend
        name="MACD"
        chip="w-[134px]"
        items={[
          { text: 'DIF:0.25', width: 'w-[174px]', color: 'text-[#262626]' },
          { text: 'DEA:0.39', width: 'w-[187px]', color: 'text-[#ee9a22]' },
          { text: 'M:-0.28', width: 'w-[164px]', color: 'text-[#c430c8]' },
        ]}
      />
      <MacdChart />
      <Legend
        name="BIAS"
        chip="w-[112px]"
        items={[
          { text: 'BIAS1:-1.71', width: 'w-[227px]', color: 'text-[#262626]', up: true },
          { text: 'BIAS2:-3.93', width: 'w-[227px]', color: 'text-[#ee9a22]', up: true },
          { text: 'BIAS3:-1.45', width: 'w-[228px]', color: 'text-[#c430c8]' },
        ]}
      />
      <BiasChart />
      <Legend
        name="RSI"
        chip="w-[89px]"
        items={[
          { text: 'RSI1:36.01', width: 'w-[214px]', color: 'text-[#262626]' },
          { text: 'RSI2:47.82', width: 'w-[214px]', color: 'text-[#ee9a22]' },
          { text: 'RSI3:52.84', width: 'w-[214px]', color: 'text-[#c430c8]' },
        ]}
      />
      <RsiChart />
      <DateAxis />
      <BottomBar />
      <SystemNav />
      <Scribbles />
    </div>
  )
}
